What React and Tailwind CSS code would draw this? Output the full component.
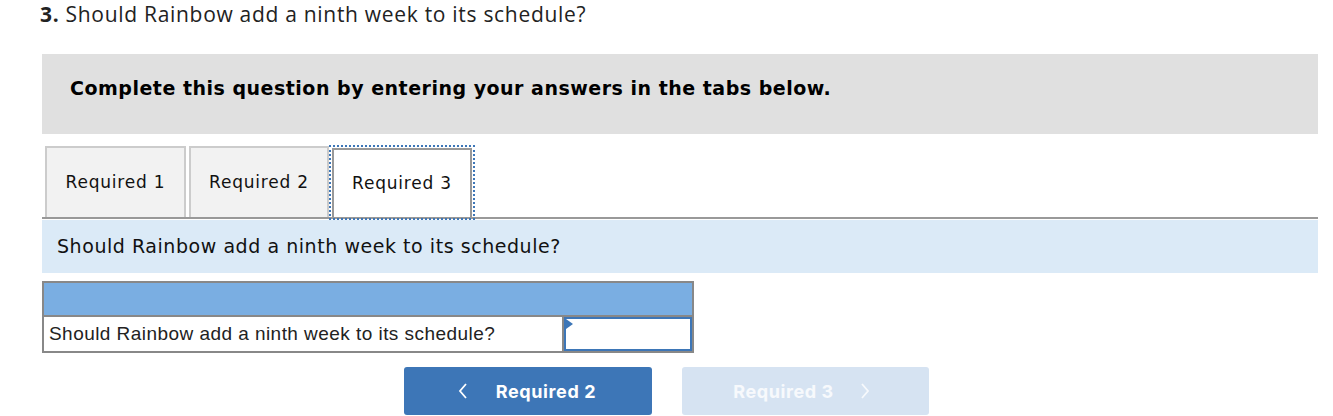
import React from "react";

const tabs = ["Required 1", "Required 2", "Required 3"];

const Chevron = ({ dir = "left", className = "" }) => (
  <svg width="10" height="16" viewBox="0 0 10 16" className={className} fill="none" stroke="currentColor" strokeWidth="1.8">
    {dir === "left" ? <path d="M8 1 L2 8 L8 15" /> : <path d="M2 1 L8 8 L2 15" />}
  </svg>
);

export default function App() {
  return (
    <div className="w-[1333px] h-[416px] overflow-hidden bg-white relative">
      {/* question title */}
      <div
        className="pl-[40px] pt-[1px] text-[21px] tracking-[0.7px] leading-[26px] text-[#222]"
        style={{ fontFamily: "'Open Sans', Lato, sans-serif" }}
      >
        <span className="font-bold">3.</span> Should Rainbow add a ninth week to its schedule?
      </div>

      <div className="ml-[42px] w-[1276px] mt-[27px]" style={{ fontFamily: "'DejaVu Sans', Verdana, sans-serif" }}>
        {/* instructions */}
        <div className="h-[80px] bg-[#e0e0e0] pl-[28px] pt-[22px]">
          <p className="text-[19px] tracking-[0.5px] font-bold text-black leading-[24px]">
            Complete this question by entering your answers in the tabs below.
          </p>
        </div>

        {/* tabs */}
        <div className="mt-[12px] flex items-end pl-[3px] border-b-2 border-[#999] h-[73px]">
          <div className="h-[71px] w-[141px] border-2 border-b-0 border-[#cccccc] bg-[#f2f2f2] flex items-center justify-center text-[17px] tracking-[0.8px] text-[#111]">
            {tabs[0]}
          </div>
          <div className="ml-[3px] h-[71px] w-[140px] border-2 border-b-0 border-[#cccccc] bg-[#f2f2f2] flex items-center justify-center text-[17px] tracking-[0.8px] text-[#111]">
            {tabs[1]}
          </div>
          <div className="h-[75px] w-[146px] -mb-[3px] border-2 border-dotted border-[#3d76b7] p-[1px]">
            <div className="h-full w-full border-2 border-b-0 border-[#999] bg-white flex items-center justify-center text-[17px] tracking-[0.8px] text-[#111]">
              {tabs[2]}
            </div>
          </div>
        </div>

        {/* sub question band */}
        <div className="mt-[1px] h-[53px] bg-[#dbeaf7] pl-[15px] flex items-center">
          <p className="text-[19px] tracking-[0.55px] text-[#111]">Should Rainbow add a ninth week to its schedule?</p>
        </div>

        {/* answer table */}
        <div className="mt-[8px] w-[652px] border-2 border-[#888]" style={{ fontFamily: "'Liberation Sans', Arial, sans-serif" }}>
          <div className="h-[34px] bg-[#7aaee2] border-b-2 border-[#888]"></div>
          <div className="flex h-[34px]">
            <div className="w-[520px] border-r-2 border-[#888] pl-[5px] flex items-center text-[19px] tracking-[0.45px] text-[#222]">
              Should Rainbow add a ninth week to its schedule?
            </div>
            <div className="relative flex-1 border-2 border-[#3d76b7] bg-white">
              <div className="absolute left-0 top-0 w-0 h-0 border-t-[5px] border-b-[5px] border-l-[7px] border-t-transparent border-b-transparent border-l-[#3d76b7]"></div>
            </div>
          </div>
        </div>
      </div>

      {/* navigation */}
      <div className="mt-[14px] flex justify-center gap-[30px]" style={{ fontFamily: "Inter, Roboto, sans-serif" }}>
        <button className="w-[248px] h-[48px] rounded-[3px] bg-[#3d76b7] text-white font-bold text-[18px] tracking-[0.6px] flex items-center justify-center gap-[28px] pr-[2px]">
          <Chevron dir="left" />
          <span>Required 2</span>
        </button>
        <button className="w-[247px] h-[48px] rounded-[3px] bg-[#d6e3f2] text-white/80 font-bold text-[18px] tracking-[0.6px] flex items-center justify-center gap-[26px] pr-[8px]">
          <span>Required 3</span>
          <Chevron dir="right" />
        </button>
      </div>
    </div>
  );
}
